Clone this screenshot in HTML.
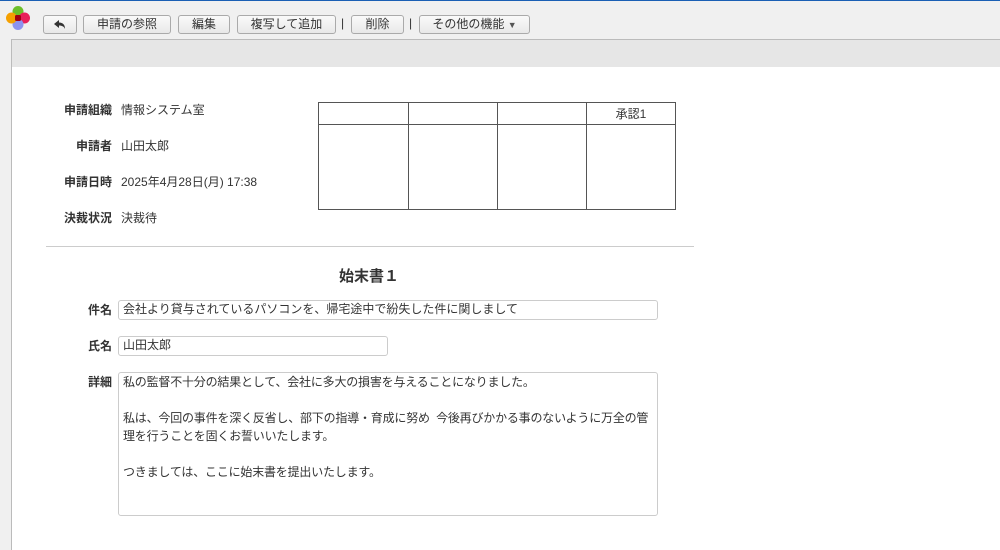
<!DOCTYPE html>
<html><head><meta charset="utf-8"><style>
*{box-sizing:border-box;margin:0;padding:0}
body{width:1000px;height:550px;overflow:hidden;background:#f0f0f0;font-family:"Liberation Sans","Noto Sans CJK JP",sans-serif;font-size:12px;color:#333;position:relative}
.a{position:absolute}
.btn{position:absolute;top:15px;height:19px;border:1px solid #aaa;border-radius:3px;background:linear-gradient(#fafafa,#e8e8e8);font-size:12px;line-height:17px;text-align:center;color:#333}
.sep{position:absolute;top:16px;font-size:12px;color:#333}
.lab{position:absolute;font-weight:bold;text-align:right;width:70px;font-size:12px}
.val{position:absolute;font-size:12px}
.inp{position:absolute;border:1px solid #ccc;border-radius:3px;background:#fff;padding:0 4px;font-size:12px;line-height:17px;white-space:nowrap}
table{table-layout:fixed}
td{border:1px solid #555;font-size:12px;text-align:center}
</style></head><body>
<div class="a" style="left:0;top:0;width:1000px;height:1px;background:#1a5fb4"></div>
<svg class="a" style="left:5px;top:5px" width="26" height="26" viewBox="0 0 26 26">
<circle cx="13" cy="6.5" r="5.5" fill="#6cbf2a"/><circle cx="19.5" cy="13" r="5.5" fill="#e8205a"/><circle cx="13" cy="19.5" r="5.5" fill="#8c93f0"/><circle cx="6.5" cy="13" r="5.5" fill="#f5a000"/><rect x="10" y="10" width="6" height="6" rx="1.5" fill="#a00010"/></svg>
<div class="btn" style="left:43px;width:34px"><svg width="12" height="10" viewBox="0 0 12 10" style="margin-top:4px"><path d="M5 0 L0 4 L5 8 V5.5 C8 5.5 10 6.5 11 9 C11 5 9 2.5 5 2.5Z" fill="#333"/></svg></div>
<div class="btn" style="left:83px;width:88px">申請の参照</div>
<div class="btn" style="left:178px;width:52px">編集</div>
<div class="btn" style="left:237px;width:99px">複写して追加</div>
<div class="sep" style="left:341px">|</div>
<div class="btn" style="left:351px;width:53px">削除</div>
<div class="sep" style="left:409px">|</div>
<div class="btn" style="left:419px;width:111px">その他の機能 <span style="font-size:9px;color:#555">▼</span></div>
<div class="a" style="left:11px;top:39px;width:989px;height:29px;background:#e6e6e6;border-top:1px solid #bbb;border-bottom:1px solid #bbb;border-left:1px solid #bbb"></div>
<div class="a" style="left:11px;top:67px;width:989px;height:483px;background:#fff;border-left:1px solid #bbb"></div>
<div class="lab" style="left:42px;top:101px">申請組織</div><div class="val" style="left:121px;top:101px">情報システム室</div>
<div class="lab" style="left:42px;top:137px">申請者</div><div class="val" style="left:121px;top:137px">山田太郎</div>
<div class="lab" style="left:42px;top:173px">申請日時</div><div class="val" style="left:121px;top:173px">2025年4月28日(月) 17:38</div>
<div class="lab" style="left:42px;top:209px">決裁状況</div><div class="val" style="left:121px;top:209px">決裁待</div>
<table class="a" style="left:318px;top:102px;width:358px;height:108px;border-collapse:collapse">
<colgroup><col style="width:90px"><col style="width:89px"><col style="width:89px"><col style="width:89px"></colgroup>
<tr style="height:22px"><td></td><td></td><td></td><td>承認1</td></tr>
<tr><td></td><td></td><td></td><td></td></tr></table>
<div class="a" style="left:46px;top:246px;width:648px;height:1px;background:#ccc"></div>
<div class="a" style="left:300px;top:265px;width:138px;text-align:center;font-weight:bold;font-size:15px">始末書１</div>
<div class="lab" style="left:42px;top:301px">件名</div>
<div class="inp" style="left:118px;top:300px;width:540px;height:20px">会社より貸与されているパソコンを、帰宅途中で紛失した件に関しまして</div>
<div class="lab" style="left:42px;top:337px">氏名</div>
<div class="inp" style="left:118px;top:336px;width:270px;height:20px">山田太郎</div>
<div class="lab" style="left:42px;top:373px">詳細</div>
<div class="inp" style="left:118px;top:372px;width:540px;height:144px;line-height:18px;padding-top:0;letter-spacing:-0.2px">私の監督不十分の結果として、会社に多大の損害を与えることになりました。<br><br>私は、今回の事件を深く反省し、部下の指導・育成に努め&nbsp; 今後再びかかる事のないように万全の管<br>理を行うことを固くお誓いいたします。<br><br>つきましては、ここに始末書を提出いたします。</div>
</body></html>
